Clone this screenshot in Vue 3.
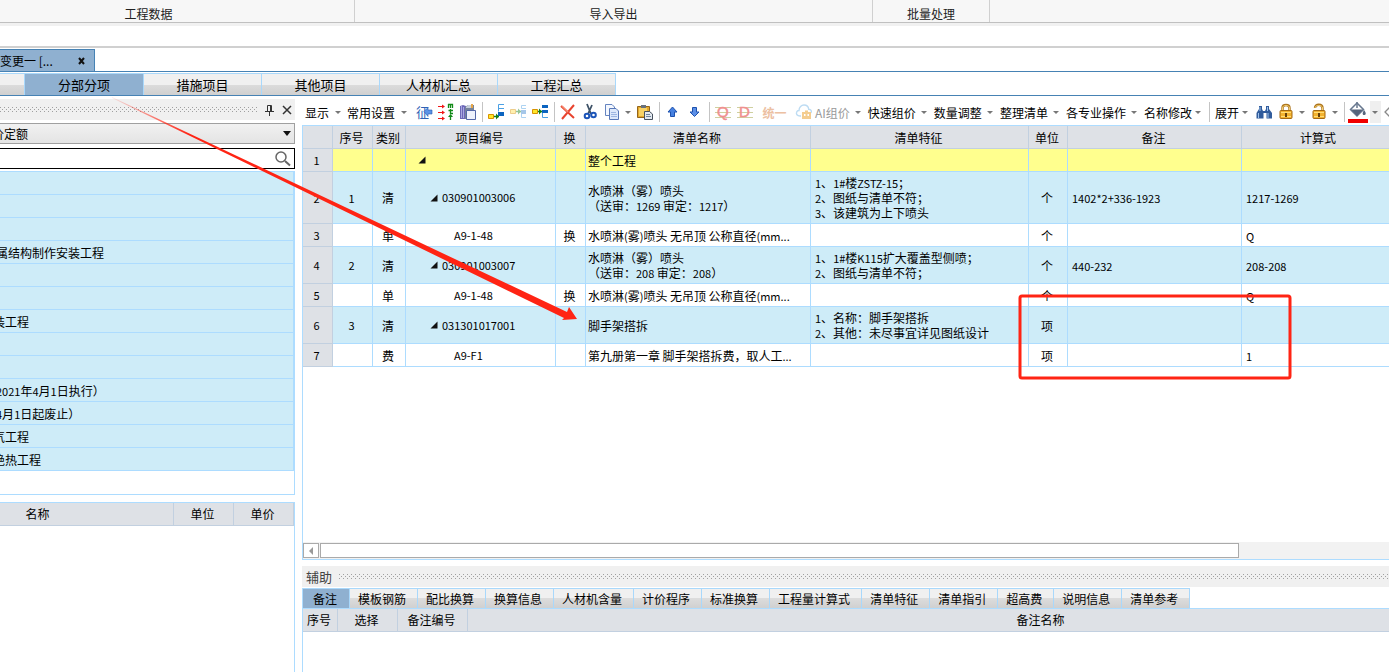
<script setup>
import { h } from 'vue'

const ribbonGroups = [
  { name: '工程数据', cls: 'g-data' },
  { name: '导入导出', cls: 'g-io' },
  { name: '批量处理', cls: 'g-batch' },
]

const subTabs = ['分部分项', '措施项目', '其他项目', '人材机汇总', '工程汇总']

const tree = [
  { text: '' }, { text: '' }, { text: '' },
  { text: '属结构制作安装工程', deep: true },
  { text: '' }, { text: '' },
  { text: '装工程' },
  { text: '' }, { text: '' },
  { text: '2021年4月1日执行）', deep: true },
  { text: '4月1日起废止）', deep: true },
  { text: '气工程' },
  { text: '绝热工程' },
]

const headers = ['', '序号', '类别', '项目编号', '换', '清单名称', '清单特征', '单位', '备注', '计算式']

const rows = [
  { kind: 'root', seq: '', type: '', code: '', swap: '', name: ['整个工程'], feat: [], unit: '', note: '', calc: '' },
  { kind: 'list tall', seq: '1', type: '清', code: '030901003006', swap: '', name: ['水喷淋（雾）喷头', '（送审：1269 审定：1217）'], feat: ['1、1#楼ZSTZ-15；', '2、图纸与清单不符；', '3、该建筑为上下喷头'], unit: '个', note: '1402*2+336-1923', calc: '1217-1269' },
  { kind: 'leaf', seq: '', type: '单', code: 'A9-1-48', swap: '换', name: ['水喷淋(雾)喷头 无吊顶 公称直径(mm...'], feat: [], unit: '个', note: '', calc: 'Q' },
  { kind: 'list', seq: '2', type: '清', code: '030901003007', swap: '', name: ['水喷淋（雾）喷头', '（送审：208 审定：208）'], feat: ['1、1#楼K115扩大覆盖型侧喷；', '2、图纸与清单不符；'], unit: '个', note: '440-232', calc: '208-208' },
  { kind: 'leaf', seq: '', type: '单', code: 'A9-1-48', swap: '换', name: ['水喷淋(雾)喷头 无吊顶 公称直径(mm...'], feat: [], unit: '个', note: '', calc: 'Q' },
  { kind: 'list', seq: '3', type: '清', code: '031301017001', swap: '', name: ['脚手架搭拆'], feat: ['1、名称：脚手架搭拆', '2、其他：未尽事宜详见图纸设计'], unit: '项', note: '', calc: '' },
  { kind: 'leaf', seq: '', type: '费', code: 'A9-F1', swap: '', name: ['第九册第一章 脚手架搭拆费，取人工...'], feat: [], unit: '项', note: '', calc: '1' },
]

const auxTabs = ['备注', '模板钢筋', '配比换算', '换算信息', '人材机含量', '计价程序', '标准换算', '工程量计算式', '清单特征', '清单指引', '超高费', '说明信息', '清单参考']

const menus = ['快速组价', '数量调整', '整理清单', '各专业操作']

// Renders Latin runs one size smaller than the Chinese text around them.
const Mixed = (props) =>
  props.text.split(/([\x20-\x7e]+)/).filter(Boolean).map((part) =>
    h('span', { style: /^[\x20-\x7e]/.test(part) ? { fontSize: '11px' } : null }, part))
Mixed.props = ['text']
</script>

<template>
  <div class="app">
    <header class="ribbon">
      <div v-for="g in ribbonGroups" :key="g.name" class="group" :class="g.cls">{{ g.name }}</div>
    </header>
    <div class="quickbar"></div>

    <div class="doctabs">
      <div class="doctab">
        <span>变更一 [...</span>
        <button class="close" aria-label="关闭">
          <svg width="7" height="8" viewBox="0 0 7 8"><path d="M1 1l5 6M6 1L1 7" stroke="#111" stroke-width="2" /></svg>
        </button>
      </div>
    </div>

    <nav class="subtabs">
      <button class="stub" aria-label="上一页"></button>
      <button v-for="(t, i) in subTabs" :key="t" :class="{ on: i === 0 }">{{ t }}</button>
    </nav>

    <div class="work">
      <aside class="left">
        <div class="dock">
          <svg class="dots" height="5"><defs><pattern id="dotsA" width="4" height="6" patternUnits="userSpaceOnUse"><path d="M0 0h1v1H0zM2 2h1v1H2zM0 4h1v1H0z" fill="#a0a0a0" /></pattern></defs><rect width="100%" height="5" fill="url(#dotsA)" /></svg>
          <button aria-label="固定"><svg width="9" height="12" viewBox="0 0 9 12"><path d="M2.500 7V1.500h4V7M5.500 1v6M0 7.500h9M4.500 8v4" fill="none" stroke="#333" /></svg></button>
          <button aria-label="关闭面板"><svg width="10" height="10" viewBox="0 0 10 10"><path d="M1 1l8 8M9 1L1 9" stroke="#333" stroke-width="1.500" /></svg></button>
        </div>
        <div class="combo">
          <select aria-label="定额"><option>价定额</option></select>
          <svg width="8" height="5" viewBox="0 0 8 5"><path d="M0 0h8L4 5z" fill="#111" /></svg>
        </div>
        <div class="search">
          <input type="text" aria-label="搜索" />
          <button aria-label="查找"><svg width="17" height="17" viewBox="0 0 17 17"><circle cx="7" cy="7" r="5" fill="none" stroke="#666" stroke-width="1.500" /><path d="M11 11l5 4.500" stroke="#666" stroke-width="2" /></svg></button>
        </div>
        <ul class="tree">
          <li v-for="(n, i) in tree" :key="i" :class="{ deep: n.deep }"><Mixed :text="n.text" /></li>
        </ul>
        <div class="quota">
          <table>
            <colgroup><col /><col class="q1" /><col class="q1" /></colgroup>
            <thead><tr><th class="qname">名称</th><th>单位</th><th>单价</th></tr></thead>
          </table>
        </div>
      </aside>

      <main class="right">
        <div class="toolbar">
          <button class="menu">显示<i class="dd"></i></button>
          <button class="menu">常用设置<i class="dd"></i></button>
          <button class="ic" aria-label="特征"><svg viewBox="0 0 16 16"><text x="0" y="13" font-size="13" fill="#2f62b5">征</text><path d="M8 7.500l4-4v2.500h4v4h-4v2.500z" fill="#5b93e6" stroke="#2a5cae" stroke-width=".6" /></svg></button>
          <button class="ic" aria-label="匹配"><svg viewBox="0 0 16 16"><path d="M0 2.500h6M0 8.500h6M0 14.500h6" stroke="#f01818" /><path d="M4 .5v4l3-2zM4 6.500v4l3-2zM4 12.500v4l3-2z" fill="#f01818" /><path d="M10.500 4V0M10 .5h4.500V4M12.500 1v3M12.500 5v4.500H15M10.500 6.500H15M12.500 16v-5" fill="none" stroke="#128a18" stroke-width="1.300" /><path d="M10 13l2.500-3L15 13z" fill="#128a18" /></svg></button>
          <button class="ic" aria-label="工料"><svg viewBox="0 0 16 16"><path d="M0 2l3-1 3 1v13H0z" fill="#6c68b8" /><path d="M1.500 2v12M3.500 3v11" stroke="#aaa8e0" /><path d="M5 3l3-2h6v14H5z" fill="#76839a" /><path d="M6 3l2-2h3v3H6z" fill="#c8d0da" /><path d="M11 0h2v4h-2z" fill="#e6a74a" /><path d="M6.500 6.500h9v9h-9z" fill="#eef2fc" stroke="#5468a8" /></svg></button>
          <i class="sep"></i>
          <button class="ic" aria-label="插入子目"><svg viewBox="0 0 16 16"><path d="M5 12.500h6" stroke="#168018" stroke-width="1.500" /><path d="M8 9.500v6l3-3z" fill="#168018" /><path d="M.5 10.500h5v4h-5z" fill="#ffe82a" stroke="#d89200" /><path d="M16 .5h-5.500v7M10.500 4.500H16" fill="none" stroke="#4ba0e4" /><path d="M10 8h6v4h-6z" fill="#0c64c0" /></svg></button>
          <button class="ic faded" aria-label="插入同级"><svg viewBox="0 0 16 16"><path d="M5 7.500h6" stroke="#168018" stroke-width="1.500" /><path d="M8 4.500v6l3-3z" fill="#168018" /><path d="M.5 5.500h5v4h-5z" fill="#ffe050" stroke="#d89200" /><path d="M16 1.500h-4.500v3H16" fill="none" stroke="#4ba0e4" /><path d="M11 6h5v4h-5z" fill="#3c84d0" /><path d="M11.500 10v3.500H16" fill="none" stroke="#4ba0e4" /></svg></button>
          <button class="ic" aria-label="插入清单"><svg viewBox="0 0 16 16"><path d="M5 7.500h5" stroke="#168018" stroke-width="1.500" /><path d="M7 4.500v6l3-3z" fill="#168018" /><path d="M.5 5.500h5v4h-5z" fill="#ffe82a" stroke="#d89200" /><path d="M10 1h6v3h-6zM10 6h6v3h-6z" fill="#0c64c0" /><path d="M10.500 9v4.500H16" fill="none" stroke="#4ba0e4" /></svg></button>
          <i class="sep"></i>
          <button class="ic" aria-label="删除"><svg viewBox="0 0 16 16"><path d="M1 2l13 12M14 1L2 15" stroke="#e8432e" stroke-width="2" /><path d="M2 2l6 6" stroke="#f58a70" stroke-width="1.500" /></svg></button>
          <button class="ic" aria-label="剪切"><svg viewBox="0 0 16 16"><path d="M5 0l4 10M10 1L6 10" stroke="#3f5368" stroke-width="1.800" /><circle cx="5" cy="12" r="2.300" fill="none" stroke="#1c54b8" stroke-width="2" /><circle cx="11.500" cy="11" r="2.300" fill="none" stroke="#1c54b8" stroke-width="2" /></svg></button>
          <button class="ic" aria-label="复制"><svg viewBox="0 0 16 16"><path d="M1.500.5H8L10.500 3v8.500h-9z" fill="#f4f8ff" stroke="#6584c0" /><path d="M5.500 4.500H12L14.500 7v8.500h-9z" fill="#dce8fb" stroke="#5878b8" /><path d="M7 8.500h5M7 10.500h6M7 12.500h6" stroke="#9db6e2" /></svg></button>
          <i class="dd"></i>
          <button class="ic" aria-label="粘贴"><svg viewBox="0 0 16 16"><path d="M.5 2.500h12v11H.5z" fill="#e3a82c" stroke="#94651a" /><path d="M2 4h8v8H2z" fill="#f8d265" /><path d="M4 1h5v3H4z" fill="#68717c" /><path d="M7.500 7.500h5L15.500 10v5.500h-8z" fill="#e4e9ef" stroke="#47515e" /><path d="M9 10.500h4M9 12.500h5" stroke="#71859b" /></svg></button>
          <i class="sep"></i>
          <button class="ic" aria-label="上移"><svg viewBox="0 0 16 16"><path d="M7.500 3L12 8H9.500v4.500h-4V8H3z" fill="#4580e0" stroke="#1d51ae" /></svg></button>
          <button class="ic" aria-label="下移"><svg viewBox="0 0 16 16"><path d="M7.500 12.500L12 8H9.500V3.500h-4V8H3z" fill="#5c8fe6" stroke="#1d51ae" /></svg></button>
          <i class="sep"></i>
          <button class="ic" aria-label="清单工程量"><svg viewBox="0 0 16 16"><path d="M0 3.500h16M0 8.500h16M0 13.500h16" stroke="#cfd0a0" /><text x="2" y="13" font-size="15" fill="#f09090" class="latin">Q</text></svg></button>
          <button class="ic" aria-label="定额工程量"><svg viewBox="0 0 16 16"><path d="M0 3.500h16M0 8.500h16M0 13.500h16" stroke="#cfd0a0" /><text x="2" y="13" font-size="15" fill="#f09090" class="latin">D</text></svg></button>
          <button class="unify">统一</button>
          <button class="ic" aria-label="云组价"><svg viewBox="0 0 16 16"><path d="M5 12H4C1 12 0 10 .6 8.300 1 7 2 6.500 3 6.500 3 3 5.500 1 8 1c3 0 4.500 2 4.700 4.300C15 5.500 16 7 15 9" fill="none" stroke="#bddcf3" stroke-width="1.400" /><path d="M6 8h3V6.500h3V8h3v7H6z" fill="#f4cd90" /><path d="M8 10h1.500v2H8zM11.500 10H13v2h-1.500z" fill="#fff" /></svg></button>
          <button class="menu dim">AI组价<i class="dd"></i></button>
          <button v-for="m in menus" :key="m" class="menu">{{ m }}<i class="dd"></i></button>
          <button class="menu tight">名称修改<i class="dd"></i></button>
          <i class="sep wide"></i>
          <button class="menu tight">展开<i class="dd"></i></button>
          <button class="ic" aria-label="查找"><svg viewBox="0 0 16 16"><path d="M3 2h3v3l1 2h2l1-2V2h3v3l3 4v5.500h-5.500V9h-3v5.500H.5V9L3 5z" fill="#315c9c" /><path d="M4 3v4M2.500 9v5M11.500 3v4M12 9v5" stroke="#a0c3ed" /></svg></button>
          <button class="ic" aria-label="锁定"><svg viewBox="0 0 16 16"><path d="M4.500 8V4c0-4 7-4 7 0v4" fill="none" stroke="#ad741b" stroke-width="2.400" /><path d="M4.500 8V4c0-3.500 7-3.500 7 0v4" fill="none" stroke="#f3cf72" /><rect x="2" y="6.500" width="12" height="8" rx="1" fill="#f3b22e" stroke="#a36812" /><path d="M3 8.500h10M3 12.500h10" stroke="#ffdd78" /><path d="M7 9h2v4H7z" fill="#66400a" /></svg></button>
          <i class="dd"></i>
          <button class="ic" aria-label="解锁"><svg viewBox="0 0 16 16"><path d="M4 4c0-4.500 7.500-4 7.500 0v4" fill="none" stroke="#ad741b" stroke-width="2.400" /><path d="M4 4c0-3.500 7.500-3.500 7.500 0v4" fill="none" stroke="#f3cf72" /><rect x="2" y="6.500" width="12" height="8" rx="1" fill="#f3b22e" stroke="#a36812" /><path d="M3 8.500h10M3 12.500h10" stroke="#ffdd78" /><path d="M7 9h2v4H7z" fill="#66400a" /></svg></button>
          <i class="dd"></i>
          <i class="sep"></i>
          <button class="ic fill" aria-label="填充颜色"><svg viewBox="0 0 20 20"><path d="M9 1l6.500 6.500L9 14 2.500 7.500z" fill="#fff" stroke="#68788f" stroke-width="1.500" /><path d="M3 7.500h12L9 14z" fill="#56657c" /><path d="M9 0v6" stroke="#68788f" stroke-width="1.500" /><path d="M16 8c3 4 1.500 5 0 5s-2-1.500 0-5z" fill="#56657c" /><path d="M0 17h20v4H0z" fill="#f00000" /></svg></button>
          <button class="pick" aria-label="选择颜色"><i class="dd"></i></button>
          <button class="ic" aria-label="清除颜色"><svg viewBox="0 0 16 16"><path d="M6 3L1 8l5 5 6-5z" fill="#fff" stroke="#8a8a8a" stroke-width="1.300" /></svg></button>
        </div>

        <div class="grid">
          <table>
            <colgroup>
              <col class="c0" /><col class="c1" /><col class="c2" /><col class="c3" /><col class="c0" />
              <col class="c5" /><col class="c6" /><col class="c7" /><col class="c8" /><col />
            </colgroup>
            <thead><tr><th v-for="(t, i) in headers" :key="i">{{ t }}</th></tr></thead>
            <tbody>
              <tr v-for="(r, i) in rows" :key="i" :class="r.kind">
                <th scope="row"><Mixed :text="String(i + 1)" /></th>
                <td class="mid"><Mixed :text="r.seq" /></td>
                <td class="mid">{{ r.type }}</td>
                <td class="code">
                  <div class="node">
                    <svg v-if="r.kind !== 'leaf'" width="8" height="8" viewBox="0 0 8 8"><path d="M7.500.5v7h-7z" fill="#111" /></svg>
                    <Mixed :text="r.code" />
                  </div>
                </td>
                <td class="mid">{{ r.swap }}</td>
                <td class="name"><div v-for="l in r.name" :key="l" class="line"><Mixed :text="l" /></div></td>
                <td><div v-for="l in r.feat" :key="l" class="line"><Mixed :text="l" /></div></td>
                <td class="mid">{{ r.unit }}</td>
                <td><div class="line"><Mixed :text="r.note" /></div></td>
                <td><div class="line"><Mixed :text="r.calc" /></div></td>
              </tr>
            </tbody>
          </table>
          <div class="hscroll">
            <button aria-label="向左滚动"><svg width="4" height="8" viewBox="0 0 4 8"><path d="M4 0v8L0 4z" fill="#999" /></svg></button>
            <div class="track"><div class="thumb"></div></div>
          </div>
        </div>

        <section class="aux">
          <div class="auxtitle">
            <span>辅助</span>
            <svg class="dots" height="5"><rect width="100%" height="5" fill="url(#dotsA)" /></svg>
          </div>
          <div class="auxbody">
            <nav class="auxtabs">
              <button v-for="(t, i) in auxTabs" :key="t" :class="{ on: i === 0 }">{{ t }}</button>
            </nav>
            <table>
              <colgroup><col class="a0" /><col class="a1" /><col class="a2" /><col /></colgroup>
              <thead><tr><th>序号</th><th>选择</th><th>备注编号</th><th>备注名称</th></tr></thead>
            </table>
          </div>
        </section>
      </main>
    </div>

    <svg class="marks">
      <defs>
        <linearGradient id="fade" gradientUnits="userSpaceOnUse" x1="105" y1="94" x2="190" y2="135">
          <stop offset="0" stop-color="#ff2414" stop-opacity="0" />
          <stop offset="1" stop-color="#ff2414" />
        </linearGradient>
      </defs>
      <path d="M112 97V98L564 318L562 320L577 319L569 307L567 312Z" fill="url(#fade)" />
      <rect x="1020" y="296" width="270" height="82" rx="2" fill="none" stroke="#ff2414" stroke-width="3" />
    </svg>
  </div>
</template>

<style>
body { margin: 0; background: #fff; }
</style>

<style scoped>
.app {
  position: relative;
  display: flex;
  flex-direction: column;
  height: 100vh;
  overflow: hidden;
  background: #fff;
  color: #000;
  font: 12px/15px "Noto Sans CJK SC", "Liberation Sans", sans-serif;
}
.app * { box-sizing: border-box; }
button {
  padding: 0;
  border: 0;
  background: none;
  color: inherit;
  font: inherit;
  white-space: nowrap;
}
svg { display: block; flex: none; }
table { border-collapse: separate; border-spacing: 0; table-layout: fixed; }
th { font-weight: 400; }

.ribbon {
  display: flex;
  flex: none;
  height: 23px;
  background: #f7f7f7;
  border-bottom: 1px solid #c0c0c0;
  color: #222;
}
.group { flex: none; padding-top: 6px; border-right: 1px solid #d0d0d0; text-align: center; }
.g-data { width: 355px; padding-right: 57px; }
.g-io { width: 518px; }
.g-batch { width: 117px; }
.quickbar { flex: none; height: 25px; border-top: 3px solid #f1f1f1; border-bottom: 2px solid #d0d0d0; }

.doctabs { flex: none; height: 24px; padding-top: 1px; border-bottom: 1px solid #4682b4; }
.doctab {
  display: flex;
  align-items: center;
  justify-content: space-between;
  width: 95px;
  height: 22px;
  padding-right: 9px;
  border: 1px solid #4682b4;
  border-width: 1px 1px 0 0;
  background: #8fb0d0;
}
.subtabs { display: flex; flex: none; height: 24px; padding-top: 1px; border-bottom: 1px solid #4682b4; }
.subtabs button {
  width: 118px;
  border-top: 1px solid #a9d8fb;
  border-right: 1px solid #a9d8fb;
  background: linear-gradient(#f0f0f0 0 50%, #dcdcdc 50%, #d0d0d0);
  font-size: 13px;
}
.subtabs .stub { width: 25px; }
.subtabs .on, .auxtabs .on { background: #8fb0d0; }
.subtabs .on { width: 119px; }

.work { display: flex; flex: 1; min-height: 0; }
.left { display: flex; flex: none; flex-direction: column; width: 295px; padding-top: 3px; overflow: hidden; }
.dock { display: flex; align-items: center; gap: 8px; height: 21px; padding-right: 3px; background: #f0f0f0; }
.dots { flex: 1; min-width: 0; width: 0; }
.combo {
  display: flex;
  align-items: center;
  height: 21px;
  margin-top: 3px;
  padding-right: 3px;
  border: 1px solid #a0a0a0;
  border-left: 0;
  background: linear-gradient(#f1f1f1, #e4e4e4);
}
.combo select {
  flex: 1;
  min-width: 0;
  height: 19px;
  margin-left: -8px;
  padding: 0;
  border: 0;
  appearance: none;
  background: none;
  color: #000;
  font: inherit;
}
.search { display: flex; align-items: center; height: 21px; margin-top: 4px; padding-right: 3px; border: 1px solid #000; border-left: 0; }
.search input { flex: 1; min-width: 0; height: 19px; padding: 0; border: 0; outline: 0; font: inherit; }
.tree {
  margin: 2px 0 0;
  padding: 0 0 23px;
  border: 1px solid #addcff;
  border-left: 0;
  list-style: none;
}
.tree li {
  height: 23px;
  border-right: 1px solid #addcff;
  border-bottom: 1px solid #addcff;
  background: #ceecf8;
  line-height: 24px;
  text-indent: -7px;
  white-space: nowrap;
}
.tree .deep { text-indent: -4px; }
.quota { flex: 1; margin-top: 7px; border: 1px solid #addcff; border-width: 1px 1px 0 0; }
.quota table { width: 100%; }
.quota th, .aux th {
  height: 23px;
  padding: 0 2px 0 0;
  border-right: 1px solid #c2d0e0;
  border-bottom: 1px solid #c2d0e0;
  background: #dee1e6;
  line-height: 22px;
}
.q1 { width: 60px; }
.quota .qname { padding-right: 98px; }

.right { display: flex; flex: 1; flex-direction: column; min-width: 0; margin-left: 7px; overflow: hidden; }
.toolbar { display: flex; flex: none; align-items: center; height: 29px; padding: 3px 0 0 3px; overflow: hidden; }
.toolbar > * { flex: none; }
.menu, .pick { display: flex; align-items: center; }
.menu .dd { width: 18px; }
.menu.tight .dd { width: 14px; }
.dim { color: #999; }
.dd { display: flex; justify-content: center; width: 11px; padding-right: 1px; }
.dd::before { content: ""; border: 3px solid transparent; border-top: 3px solid #777; border-bottom: 0; }
.sep { width: 1px; height: 20px; margin: 0 2px 0 3px; background: #c4c4c4; }
.wide { margin-right: 5px; }
.ic { display: flex; align-items: center; justify-content: center; width: 22px; height: 22px; }
.ic svg { width: 16px; height: 16px; overflow: visible; }
.fill svg { width: 20px; height: 20px; }
.latin { font-family: "Liberation Sans", sans-serif; stroke: #f09090; stroke-width: .5; }
.faded { opacity: .45; }
.unify { width: 37px; color: #ecc0a2; font-weight: 700; }
.pick { height: 22px; margin-left: 1px; background: #efefef; }

.grid {
  display: flex;
  flex: 1;
  flex-direction: column;
  min-height: 0;
  overflow: hidden;
  border: 1px solid #addcff;
  border-right: 0;
}
.grid table { width: calc(100% + 8px); }
.grid th, .grid td {
  height: 23px;
  padding: 0;
  border-right: 1px solid #addcff;
  border-bottom: 1px solid #addcff;
  white-space: nowrap;
}
.grid td { padding-left: 4px; }
.grid .name { padding-left: 2px; }
.grid .mid { padding: 0 2px 0 0; text-align: center; }
.grid th { padding-right: 2px; border-color: #c2d0e0; background: #dee1e6; }
.grid .line { height: 15px; }
.root td { background: #ffff8e; }
.list td { background: #ceecf8; }
.grid .list td { height: 37px; }
.grid .tall td { height: 52px; }
.grid td.code { padding-left: 24px; }
.grid .root .code { padding-left: 12px; }
.grid .leaf .code { padding-left: 48px; }
.node { display: flex; align-items: center; height: 15px; }
.node svg { margin-right: 4px; }
.c0 { width: 30px; }
.c1 { width: 40px; }
.c2 { width: 33px; }
.c3 { width: 150px; }
.c5 { width: 225px; }
.c6 { width: 218px; }
.c7 { width: 39px; }
.c8 { width: 174px; }
.hscroll { display: flex; gap: 1px; flex: none; height: 17px; margin-top: auto; padding: 1px 0; background: #f2f2f2; }
.hscroll button { display: flex; align-items: center; justify-content: center; width: 16px; border: 1px solid #aaa; background: #fff; }
.track { flex: 1; }
.thumb { width: 86%; height: 100%; border: 1px solid #aaa; background: #fff; }

.aux { flex: none; height: 112px; padding-top: 6px; overflow: hidden; }
.auxtitle { display: flex; align-items: center; gap: 7px; height: 21px; padding-left: 4px; background: #f0f0f0; color: #444; font-size: 13px; }
.auxbody { height: 85px; margin-top: 1px; border-left: 1px solid #addcff; }
.auxtabs { display: flex; height: 21px; border-bottom: 1px solid #addcff; }
.auxtabs button {
  padding: 0 11px 0 8px;
  border-top: 1px solid #a9d8fb;
  border-right: 1px solid #a9d8fb;
  background: linear-gradient(#f0f0f0 0 50%, #dcdcdc 50%, #d0d0d0);
}
.auxtabs .on { padding: 0 12px 0 10px; }
.aux table { width: calc(100% + 227px); }
.a0 { width: 35px; }
.a1 { width: 60px; }
.a2 { width: 70px; }

.marks { position: absolute; inset: 0; width: 100%; height: 100%; pointer-events: none; }
</style>
